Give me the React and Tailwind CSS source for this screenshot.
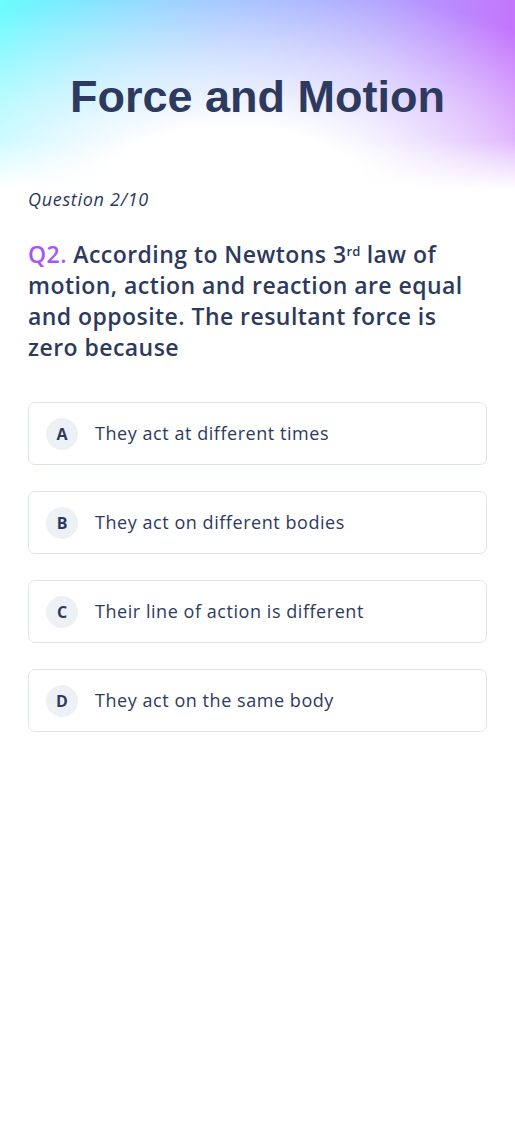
const options = [
  { key: 'A', text: 'They act at different times' },
  { key: 'B', text: 'They act on different bodies' },
  { key: 'C', text: 'Their line of action is different' },
  { key: 'D', text: 'They act on the same body' },
];

const OptionRow = ({ letter, text }) => (
  <button className="flex h-[63px] w-full items-center gap-[17px] rounded-[7px] border border-[#dce4ee] bg-white px-[17px] text-left">
    <span className="flex h-[32px] w-[32px] items-center justify-center rounded-full bg-[#edf1f6] text-[16px] font-bold text-[#2d3a5e]">
      {letter}
    </span>
    <span className="text-[18px] tracking-[0.55px] text-[#2d3a5e]">{text}</span>
  </button>
);

const App = () => {
  return (
    <div className="min-h-[1125px] w-[515px] bg-white font-['Open_Sans',sans-serif]">
      <header className="relative h-[190px] bg-[linear-gradient(100deg,#6cfcff_0%,#98c0ff_40%,#b0a0ff_70%,#c86cfb_100%)]">
        <div className="absolute inset-0 bg-[radial-gradient(ellipse_85%_110%_at_45%_100%,#ffffff_30%,rgba(255,255,255,0.55)_65%,rgba(255,255,255,0)_100%)]" />
        <div className="absolute inset-x-0 bottom-0 h-[50px] bg-gradient-to-b from-transparent to-white" />
        <h1 className="relative pt-[70px] text-center font-['Liberation_Sans',Arial,sans-serif] text-[45px] font-bold leading-[54px] text-[#2d3a5e]">
          Force and Motion
        </h1>
      </header>

      <main className="px-[28px]">
        <p className="-mt-[1px] text-[18px] italic leading-[20px] tracking-[0.7px] text-[#2d3a5e]">Question 2/10</p>

        <h2 className="mt-[30px] text-[23px] font-semibold leading-[31px] tracking-[0.45px] text-[#2d3a5e]">
          <span className="text-[#a855f7]">Q2.</span> According to Newtons 3
          <span className="align-[7px] text-[13px] leading-none tracking-normal">rd</span> law of motion, action and reaction are equal and opposite. The resultant force is zero because
        </h2>

        <div className="mt-[39px] flex flex-col gap-[26px]">
          {options.map((o) => (
            <OptionRow key={o.key} letter={o.key} text={o.text} />
          ))}
        </div>
      </main>
    </div>
  );
};

export default App;
